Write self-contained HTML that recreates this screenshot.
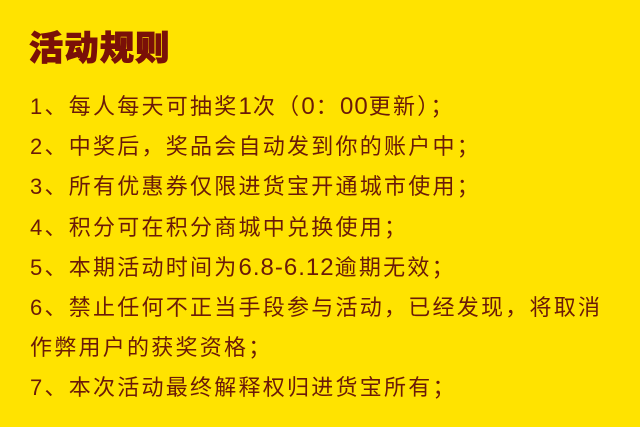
<!DOCTYPE html>
<html><head><meta charset="utf-8"><style>
html,body{margin:0;padding:0}
body{width:640px;height:427px;background:#FFE300;overflow:hidden;position:relative;font-family:"Liberation Sans","Noto Sans CJK SC",sans-serif}
h1{position:absolute;left:29px;top:27px;margin:0;font-size:34px;line-height:44px;font-weight:900;color:#7a1008;letter-spacing:1.5px;-webkit-text-stroke:1px #7a1008}
.b{position:absolute;left:30px;top:87px;width:610px;font-size:22px;line-height:40.2px;color:#6a1a08;letter-spacing:2.25px}
.b div{white-space:nowrap}
.n{font-size:24px;letter-spacing:1px}
</style></head><body>
<h1>活动规则</h1>
<div class="b">
<div>1、每人每天可抽奖<span class="n">1</span>次（<span class="n">0</span>：<span class="n">00</span>更新）；</div>
<div>2、中奖后，奖品会自动发到你的账户中；</div>
<div>3、所有优惠券仅限进货宝开通城市使用；</div>
<div>4、积分可在积分商城中兑换使用；</div>
<div>5、本期活动时间为<span class="n">6.8-6.12</span>逾期无效；</div>
<div>6、禁止任何不正当手段参与活动，已经发现，将取消</div>
<div>作弊用户的获奖资格；</div>
<div>7、本次活动最终解释权归进货宝所有；</div>
</div>
</body></html>
